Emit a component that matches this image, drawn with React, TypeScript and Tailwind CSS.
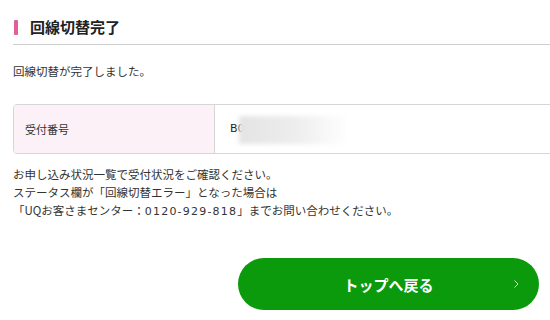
import React from "react";

export default function App() {
  return (
    <div className="w-[550px] h-[320px] overflow-hidden bg-white text-[#333] font-['Noto_Sans_CJK_JP','Noto_Sans',sans-serif]">
      <div className="pl-[13px] pt-[16px] w-[600px]">
        <div className="flex items-center border-b border-[#cfcfcf] pb-[6px]">
          <span className="block w-[4px] h-[15px] ml-[1px] bg-[#e35d9b] rounded-[1px]" />
          <h1 className="ml-[12px] text-[15px] leading-[22px] font-bold text-[#222]">回線切替完了</h1>
        </div>

        <p className="mt-[17px] text-[11.5px] leading-[18px]">回線切替が完了しました。</p>

        <div className="mt-[24px] flex h-[50px] w-[580px] rounded-[4px] border border-[#d6d6d6] overflow-hidden">
          <div className="w-[201px] flex items-center pl-[11px] bg-[#fdf1f8] border-r border-[#d6d6d6] text-[11px]">
            受付番号
          </div>
          <div className="relative flex-1 flex items-center pl-[15px] text-[11.5px]">
            <span className="font-['DejaVu_Sans'] text-[11px] text-[#222]">B0</span>
            <div className="absolute left-[24px] top-[11px] w-[110px] h-[28px] bg-gradient-to-r from-[#e4e4e4] via-[#ededed] to-white blur-[2px]" />
          </div>
        </div>

        <div className="mt-[11px] text-[11.5px] leading-[18px]">
          <p>お申し込み状況一覧で受付状況をご確認ください。</p>
          <p>ステータス欄が「回線切替エラー」となった場合は</p>
          <p>
            「UQお客さまセンター：
            <span className="font-['DejaVu_Sans'] text-[11px] tracking-[1.2px]">0120-929-818</span>」までお問い合わせください。
          </p>
        </div>

        <button className="relative mt-[37px] ml-[225px] flex h-[52px] w-[301px] items-center justify-center rounded-full bg-[#0b9a0b] text-white">
          <span className="text-[15px] font-bold leading-none">トップへ戻る</span>
          <svg className="absolute right-[19px] top-1/2 -translate-y-1/2" width="7" height="10" viewBox="0 0 7 10">
            <polyline points="1.5,1.5 5,5 1.5,8.5" fill="none" stroke="rgba(255,255,255,0.8)" strokeWidth="1" />
          </svg>
        </button>
      </div>
    </div>
  );
}
